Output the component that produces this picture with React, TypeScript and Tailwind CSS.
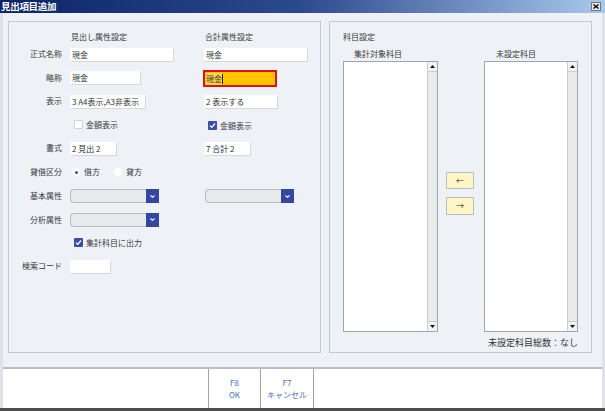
import React from "react";

const Input = ({ w, text, cls = "" }: { w: string; text?: string; cls?: string }) => (
  <div
    className={`${w} h-[13px] bg-white shadow-[1px_1px_0_#d3d8df] text-[8px] leading-[13px] pl-[2px] text-[#333] whitespace-nowrap overflow-hidden ${cls}`}
  >
    {text}
  </div>
);

const Check = ({ checked }: { checked?: boolean }) =>
  checked ? (
    <div className="w-[9px] h-[9px] bg-[#3b4ea6] flex items-center justify-center rounded-[1px]">
      <svg width="7" height="7" viewBox="0 0 7 7">
        <path d="M1 3.6 L2.8 5.3 L6 1.5" stroke="white" strokeWidth="1.3" fill="none" />
      </svg>
    </div>
  ) : (
    <div className="w-[9px] h-[9px] bg-white border border-[#cfd4da] rounded-[1px]" />
  );

const Select = () => (
  <div className="w-[89px] h-[14px] flex">
    <div className="flex-1 bg-[#e8e9eb] border border-[#b9bcc0] border-r-0 rounded-l-[4px]" />
    <div className="w-[13px] bg-[#3447a0] flex items-center justify-center">
      <svg width="7" height="5" viewBox="0 0 7 5">
        <path d="M1.5 1.5 L3.5 3.3 L5.5 1.5" stroke="white" strokeWidth="1.1" fill="none" />
      </svg>
    </div>
  </div>
);

const Row = ({
  h,
  label,
  left,
  right,
}: {
  h: string;
  label?: string;
  left?: React.ReactNode;
  right?: React.ReactNode;
}) => (
  <div className={`flex items-center ${h}`}>
    <div className="w-[53px] text-right text-[8px] text-[#3a3a3a] whitespace-nowrap">{label}</div>
    <div className="w-[142px] pl-[8px] flex items-center">{left}</div>
    <div className="flex items-center">{right}</div>
  </div>
);

const ListBox = ({ w }: { w: string }) => (
  <div className={`${w} h-[271px] border border-[#9fa6ad] bg-white flex`}>
    <div className="flex-1" />
    <div className="w-[10px] bg-[#e9eaec] border-l border-[#c9cdd2] flex flex-col justify-between">
      <div className="h-[10px] bg-[#f1f2f3] border-b border-[#c9cdd2] flex items-center justify-center">
        <svg width="5" height="3" viewBox="0 0 5 3">
          <path d="M0 3 L2.5 0 L5 3 Z" fill="#111" />
        </svg>
      </div>
      <div className="h-[10px] bg-[#f1f2f3] border-t border-[#c9cdd2] flex items-center justify-center">
        <svg width="5" height="3" viewBox="0 0 5 3">
          <path d="M0 0 L2.5 3 L5 0 Z" fill="#111" />
        </svg>
      </div>
    </div>
  </div>
);

export default function App() {
  return (
    <div className="w-[605px] h-[411px] flex flex-col bg-[#eef1f6] font-['Noto_Sans_CJK_JP',sans-serif] overflow-hidden">
      {/* Title bar */}
      <div className="h-[13px] bg-[linear-gradient(to_right,#0c2468,#2c4a8e_50%,#a9c8ec)] flex items-center justify-between pl-[1px] pr-[4px]">
        <span className="text-white font-bold text-[9.5px] leading-[13px] tracking-[-0.3px]">見出項目追加</span>
        <div className="w-[10px] h-[9px] bg-[#e4e4e4] border border-[#777] flex items-center justify-center">
          <svg width="6" height="5" viewBox="0 0 6 5">
            <path d="M0.5 0.5 L5.5 4.5 M5.5 0.5 L0.5 4.5" stroke="#000" strokeWidth="1.3" />
          </svg>
        </div>
      </div>

      {/* Body */}
      <div className="flex-1 flex flex-col border-l-[3px] border-r-[3px] border-[#dfe2e6]">
        <div className="flex gap-[8px] pt-[8px] pl-[5px]">
          {/* Left panel */}
          <div className="w-[313px] h-[332px] border border-[#c3c9d1] flex flex-col pt-[9px]">
            <div className="flex items-center h-[11px]">
              <div className="w-[53px]" />
              <div className="w-[142px] pl-[9px] text-[8px] text-[#3a3a3a]">見出し属性設定</div>
              <div className="pl-[1px] text-[8px] text-[#3a3a3a]">合計属性設定</div>
            </div>
            <Row h="h-[24px]" label="正式名称" left={<Input w="w-[103px]" text="現金" />} right={<Input w="w-[103px]" text="現金" />} />
            <Row
              h="h-[23px]"
              label="略称"
              left={<Input w="w-[70px]" text="現金" />}
              right={
                <div className="w-[74px] h-[17px] -ml-[1px] mt-[2px] border-2 border-[#e3101b] bg-[#ffc600] flex items-center text-[8px] text-[#333] pl-[1px]">
                  <span className="bg-[#ffd84a]">現金</span>
                  <span className="w-[1px] h-[10px] bg-[#222]" />
                </div>
              }
            />
            <Row h="h-[24px]" label="表示" left={<Input w="w-[75px]" text="3 A4表示,A3非表示" />} right={<Input w="w-[73px]" text="2 表示する" />} />
            <Row
              h="h-[23px]"
              left={
                <div className="flex items-center pl-[4px] gap-[3px] text-[8px] text-[#3a3a3a]">
                  <Check />
                  <span>金額表示</span>
                </div>
              }
              right={
                <div className="flex items-center pl-[4px] gap-[3px] text-[8px] text-[#3a3a3a] mt-[2px]">
                  <Check checked />
                  <span>金額表示</span>
                </div>
              }
            />
            <Row h="h-[24px]" label="書式" left={<Input w="w-[46px]" text="2 見出 2" />} right={<Input w="w-[46px]" text="7 合計 2" />} />
            <Row
              h="h-[24px]"
              label="貸借区分"
              left={
                <div className="flex items-center text-[8px] text-[#3a3a3a] pl-[2px]">
                  <div className="w-[8px] h-[8px] rounded-full bg-white flex items-center justify-center">
                    <div className="w-[3px] h-[3px] rounded-full bg-[#3b4ea6]" />
                  </div>
                  <span className="ml-[4px]">借方</span>
                  <div className="w-[8px] h-[8px] rounded-full bg-white ml-[14px]" />
                  <span className="ml-[4px]">貸方</span>
                </div>
              }
            />
            <Row h="h-[24px]" label="基本属性" left={<Select />} right={<div className="pl-[1px]"><Select /></div>} />
            <Row h="h-[23px]" label="分析属性" left={<Select />} />
            <Row
              h="h-[23px]"
              left={
                <div className="flex items-center pl-[4px] gap-[3px] text-[8px] text-[#3a3a3a]">
                  <Check checked />
                  <span>集計科目に出力</span>
                </div>
              }
            />
            <Row h="h-[24px]" label="検索コード" left={<Input w="w-[40px]" />} />
          </div>

          {/* Right panel */}
          <div className="w-[263px] h-[332px] border border-[#c3c9d1] flex flex-col pt-[9px] pl-[13px]">
            <div className="h-[11px] text-[8px] text-[#3a3a3a] leading-[11px]">科目設定</div>
            <div className="flex mt-[6px] h-[11px] text-[8px] text-[#3a3a3a] leading-[11px]">
              <div className="w-[141px] pl-[11px]">集計対象科目</div>
              <div className="pl-[12px]">未設定科目</div>
            </div>
            <div className="flex mt-[2px]">
              <ListBox w="w-[95px]" />
              <div className="w-[28px] ml-[8px] mr-[10px] pt-[111px] flex flex-col gap-[8px]">
                <div className="h-[17px] bg-[#fff5c6] border border-[#b9bcc0] flex items-center justify-center text-[8px] text-[#333]">←</div>
                <div className="h-[18px] bg-[#fff5c6] border border-[#b9bcc0] flex items-center justify-center text-[8px] text-[#333]">→</div>
              </div>
              <ListBox w="w-[94px]" />
            </div>
            <div className="w-[235px] mt-[5px] text-right text-[9px] leading-[12px] text-[#333]">未設定科目総数：なし</div>
          </div>
        </div>

        <div className="flex-1" />
        {/* Bottom bar */}
        <div className="h-[41px] bg-white border-t-2 border-[#b9bdc3] flex">
          <div className="w-[205px]" />
          <div className="w-[53px] border-l-[1.5px] border-r border-[#9ea3a9] flex flex-col items-center justify-center text-[8px] leading-[12px] text-[#4b74b8]">
            <span>F8</span>
            <span>OK</span>
          </div>
          <div className="w-[53px] border-r-[1.5px] border-[#9ea3a9] flex flex-col items-center justify-center text-[8px] leading-[12px] text-[#4b74b8]">
            <span>F7</span>
            <span>キャンセル</span>
          </div>
        </div>
      </div>
      <div className="h-[3px] bg-[#4d4d4d]" />
    </div>
  );
}
